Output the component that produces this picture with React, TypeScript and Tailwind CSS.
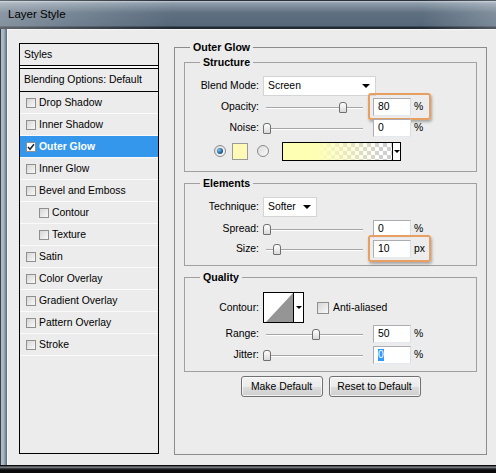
import React from "react";

const rows: { t: string; indent?: boolean; active?: boolean }[] = [
  { t: "Drop Shadow" },
  { t: "Inner Shadow" },
  { t: "Outer Glow", active: true },
  { t: "Inner Glow" },
  { t: "Bevel and Emboss" },
  { t: "Contour", indent: true },
  { t: "Texture", indent: true },
  { t: "Satin" },
  { t: "Color Overlay" },
  { t: "Gradient Overlay" },
  { t: "Pattern Overlay" },
  { t: "Stroke" },
];

function CheckBox({ checked = false, size = 10 }: { checked?: boolean; size?: number }) {
  return (
    <div
      className={`shrink-0 border border-[#8e8f8f] flex items-center justify-center ${
        size === 10 ? "w-[10px] h-[10px]" : "w-[12px] h-[12px]"
      } ${checked ? "bg-white" : "bg-[linear-gradient(135deg,#d6d6d6,#f9f9f9)]"}`}
    >
      {checked && (
        <svg width="8" height="8" viewBox="0 0 8 8">
          <path d="M1 4 L3 6.2 L7 1.2" stroke="#1a2a3a" strokeWidth="1.6" fill="none" />
        </svg>
      )}
    </div>
  );
}

function Legend({ children }: { children: React.ReactNode }) {
  return (
    <div className="absolute top-[-7px] left-[15px] px-[3px] bg-[#ececec] font-bold text-[10.6px] leading-[13px]">
      {children}
    </div>
  );
}

function Label({ children }: { children: React.ReactNode }) {
  return <div className="w-[74px] shrink-0 text-right">{children}</div>;
}

function Slider({ pos }: { pos: number }) {
  return (
    <div className="relative w-[106px] h-[20px] ml-[4px] shrink-0">
      <div className="absolute left-[3px] top-[10px] w-[97px] h-[2px] border-t border-[#a6a6a6] border-b border-b-white" />
      <div
        className="absolute top-[5px] w-[8px] h-[11px] rounded-t-[3px] rounded-b-[1px] border border-[#6f6f6f] bg-[linear-gradient(to_bottom,#ffffff,#d9d9d9)]"
        style={{ left: pos }}
      />
    </div>
  );
}

function NumBox({
  value,
  unit,
  highlight = false,
  selected = false,
}: {
  value: string;
  unit: string;
  highlight?: boolean;
  selected?: boolean;
}) {
  return (
    <div className="flex items-center">
      <div className="relative ml-[4px]">
        <div className="w-[38px] h-[18px] bg-white border border-[#abadb3] border-r-[#dbdfe6] border-b-[#e3e9ef] flex items-center pl-[4px]">
          {selected ? <span className="bg-[#3399ff] text-white leading-[12px]">{value}</span> : value}
        </div>
        {highlight && (
          <div className="absolute left-[-5px] top-[-5px] w-[63px] h-[27px] border-2 border-[#e8a062] rounded-[3px] shadow-[1px_2px_3px_rgba(0,0,0,0.3)] pointer-events-none" />
        )}
      </div>
      <span className="ml-[3px]">{unit}</span>
    </div>
  );
}

function Arrow() {
  return <div className="w-0 h-0 border-x-[4px] border-x-transparent border-t-[4px] border-t-black" />;
}

function Select({ value, w }: { value: string; w: string }) {
  return (
    <div className={`ml-[4px] h-[20px] bg-white border border-[#d4d4d4] flex items-center pl-[4px] pr-[5px] ${w}`}>
      <span>{value}</span>
      <div className="ml-auto">
        <Arrow />
      </div>
    </div>
  );
}

function Radio({ checked = false }: { checked?: boolean }) {
  return (
    <div className="w-[12px] h-[12px] rounded-full border border-[#8a8a8a] bg-[linear-gradient(135deg,#dcdcdc,#fafafa)] flex items-center justify-center shrink-0">
      {checked && (
        <div className="w-[6px] h-[6px] rounded-full bg-[radial-gradient(circle_at_35%_35%,#7ec3f0,#1f5f93_60%,#0e3c63)]" />
      )}
    </div>
  );
}

function Button({ children, w }: { children: React.ReactNode; w: string }) {
  return (
    <div
      className={`h-[21px] ${w} rounded-[3px] border border-[#707070] flex items-center justify-center bg-[linear-gradient(to_bottom,#f2f2f2_0%,#ebebeb_50%,#dddddd_50%,#cfcfcf_100%)] shadow-[inset_0_0_0_1px_rgba(255,255,255,0.7)]`}
    >
      {children}
    </div>
  );
}

export default function App() {
  return (
    <div className="w-[496px] h-[473px] overflow-hidden flex flex-col bg-[#6d7d8d] text-black font-['Liberation_Sans',Arial,sans-serif]">
      {/* Title bar */}
      <div className="h-[29px] shrink-0 flex items-center pl-[8px] text-[11.5px] bg-[linear-gradient(to_right,rgba(255,255,255,0.28),rgba(255,255,255,0)_35%,rgba(255,255,255,0)_85%,rgba(255,255,255,0.22)),linear-gradient(to_bottom,#2a323b_0px,#2a323b_1px,#c3ccd4_1px,#8f9dab_3px,#5e6f80_13px,#55677a_26px,#222a33_27px,#222a33_29px)]">
        Layer Style
      </div>

      <div className="flex-1 flex min-h-0">
        {/* left frame */}
        <div className="w-[7px] shrink-0 bg-[linear-gradient(to_right,#38424d_0px,#38424d_1px,#b4bfca_1px,#a3b0bd_4px,#6e7e8f_6px,#5a6877_7px)]" />

        {/* content */}
        <div className="flex-1 flex items-start bg-[#ececec] border-t border-l border-[#f7f7f7] text-[10.4px]">
          {/* Styles list */}
          <div className="ml-[11px] mt-[13px] w-[140px] h-[411px] shrink-0 border border-black flex flex-col">
            <div className="h-[22px] shrink-0 border-b border-black flex items-center pl-[4px]">Styles</div>
            <div className="h-[2px] shrink-0 bg-[#f8f8f8]" />
            <div className="h-[24px] shrink-0 border-y border-black flex items-center pl-[4px]">
              Blending Options: Default
            </div>
            {rows.map((r) => (
              <div
                key={r.t}
                className={`h-[22px] shrink-0 flex items-center border-b border-[#fafafa] ${
                  r.indent ? "pl-[19px]" : "pl-[6px]"
                } ${r.active ? "bg-[#3597ec] text-white font-bold" : ""}`}
              >
                <CheckBox checked={!!r.active} />
                <span className="ml-[3px]">{r.t}</span>
              </div>
            ))}
          </div>

          {/* Outer Glow panel */}
          <div className="relative ml-[15px] mt-[17px] w-[313px] h-[408px] shrink-0 border border-[#8c8c8c] px-[9px] pt-[14px] flex flex-col">
            <Legend>Outer Glow</Legend>

            {/* Structure */}
            <div className="relative h-[110px] shrink-0 border border-[#a0a0a0] pt-[13px] flex flex-col">
              <Legend>Structure</Legend>
              <div className="h-[20px] flex items-center">
                <Label>Blend Mode:</Label>
                <Select value="Screen" w="w-[113px]" />
              </div>
              <div className="mt-[1px] h-[20px] flex items-center">
                <Label>Opacity:</Label>
                <Slider pos={76} />
                <NumBox value="80" unit="%" highlight />
              </div>
              <div className="mt-[1px] h-[20px] flex items-center">
                <Label>Noise:</Label>
                <Slider pos={0} />
                <NumBox value="0" unit="%" />
              </div>
              <div className="mt-[3px] h-[20px] flex items-center">
                <div className="ml-[29px]">
                  <Radio checked />
                </div>
                <div className="ml-[6px] w-[16px] h-[17px] border border-[#9a9a9a] bg-[#fffab5]" />
                <div className="ml-[9px]">
                  <Radio />
                </div>
                <div className="ml-[13px] w-[119px] h-[19px] border border-black flex">
                  <div className="flex-1 bg-[linear-gradient(to_right,#ffffb4_0%,#ffffb4_30%,rgba(255,255,180,0)_90%),repeating-conic-gradient(#cfcfcf_0_25%,#ffffff_0_50%)] bg-[length:100%_100%,8px_8px]" />
                  <div className="w-[8px] border-l border-black bg-white flex items-center justify-center">
                    <div className="w-0 h-0 border-x-[3px] border-x-transparent border-t-[3px] border-t-black" />
                  </div>
                </div>
              </div>
            </div>

            {/* Elements */}
            <div className="relative mt-[11px] h-[83px] shrink-0 border border-[#a0a0a0] pt-[13px] flex flex-col">
              <Legend>Elements</Legend>
              <div className="h-[20px] flex items-center">
                <Label>Technique:</Label>
                <Select value="Softer" w="w-[54px]" />
              </div>
              <div className="mt-[2px] h-[20px] flex items-center">
                <Label>Spread:</Label>
                <Slider pos={0} />
                <NumBox value="0" unit="%" />
              </div>
              <div className="h-[20px] flex items-center">
                <Label>Size:</Label>
                <Slider pos={10} />
                <NumBox value="10" unit="px" highlight />
              </div>
            </div>

            {/* Quality */}
            <div className="relative mt-[11px] h-[95px] shrink-0 border border-[#a0a0a0] pt-[14px] flex flex-col">
              <Legend>Quality</Legend>
              <div className="h-[31px] flex items-center">
                <Label>Contour:</Label>
                <div className="ml-[4px] w-[41px] h-[31px] border border-black flex bg-white">
                  <svg width="29" height="29" viewBox="0 0 29 29" className="block">
                    <polygon points="2,29 29,0 29,29" fill="#959595" />
                  </svg>
                  <div className="flex-1 border-l border-black flex items-center justify-center">
                    <div className="w-0 h-0 border-x-[3px] border-x-transparent border-t-[3px] border-t-black" />
                  </div>
                </div>
                <div className="ml-[13px]">
                  <CheckBox size={12} />
                </div>
                <span className="ml-[4px]">Anti-aliased</span>
              </div>
              <div className="mt-[1px] h-[20px] flex items-center">
                <Label>Range:</Label>
                <Slider pos={49} />
                <NumBox value="50" unit="%" />
              </div>
              <div className="mt-[1px] h-[20px] flex items-center">
                <Label>Jitter:</Label>
                <Slider pos={0} />
                <NumBox value="0" unit="%" selected />
              </div>
            </div>

            {/* Buttons */}
            <div className="mt-[4px] flex justify-center gap-[6px]">
              <Button w="w-[82px]">Make Default</Button>
              <Button w="w-[92px]">Reset to Default</Button>
            </div>
          </div>
        </div>
      </div>

      {/* bottom frame */}
      <div className="h-[8px] shrink-0 bg-[linear-gradient(to_bottom,#0d0d0d_0px,#0d0d0d_1px,#9ea2a6_2px,#474b50_3px,#0a0a0a_5px)]" />
    </div>
  );
}
